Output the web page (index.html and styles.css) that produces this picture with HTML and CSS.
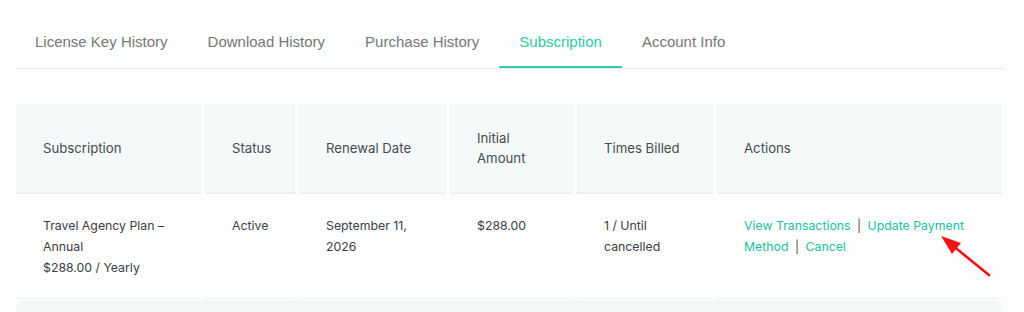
FILE: index.html
```html
<!DOCTYPE html>
<html>
<head>
    <meta charset="UTF-8">
    <title>Subscription</title>
    <link rel="stylesheet" href="styles.css">
</head>
<body>
    <div class="tabs">
        <a class="tab">License Key History</a>
        <a class="tab">Download History</a>
        <a class="tab">Purchase History</a>
        <a class="tab active">Subscription</a>
        <a class="tab">Account Info</a>
    </div>

    <table class="subs">
        <thead>
            <tr>
                <th class="c-sub">Subscription</th>
                <th class="c-status">Status</th>
                <th class="c-date">Renewal Date</th>
                <th class="c-amount">Initial Amount</th>
                <th class="c-billed">Times Billed</th>
                <th class="c-actions">Actions</th>
            </tr>
        </thead>
        <tbody>
            <tr>
                <td>Travel Agency Plan &ndash; Annual<br>$288.00 / Yearly</td>
                <td>Active</td>
                <td>September 11, 2026</td>
                <td>$288.00</td>
                <td>1 / Until cancelled</td>
                <td class="actions">
                    <a href="#">View Transactions</a> <span class="sep">|</span> <a href="#">Update Payment Method</a> <span class="sep">|</span> <a href="#">Cancel</a>
                </td>
            </tr>
        </tbody>
    </table>
    <div class="shade"></div>

    <svg class="arrow" width="70" height="60" viewBox="0 0 70 60">
        <line x1="57" y1="43" x2="20" y2="13" stroke="#f01414" stroke-width="2.6" stroke-linecap="round"/>
        <polygon points="9,4 29,11 20,22" fill="#f01414"/>
    </svg>
</body>
</html>
```

FILE: styles.css
```css
body {
    margin: 0;
    background-color: #fcfdfd;
    font-family: Inter, "Noto Sans", sans-serif;
    height: 312px;
    overflow: hidden;
    position: relative;
}

.tabs {
    display: flex;
    margin: 0 19px 0 15px;
    border-bottom: 1px solid #e7ebee;
}

.tab {
    padding: 33px 20px 15px;
    line-height: 18px;
    font-family: "Liberation Sans", Arial, sans-serif;
    font-size: 15px;
    color: #787878;
    border-bottom: 2px solid transparent;
}

.tab.active {
    color: #2fc8a8;
    border-bottom-color: #3ccaac;
}

.subs {
    margin: 35px 0 0 12px;
    width: 994px;
    table-layout: fixed;
    border-collapse: separate;
    border-spacing: 4px 0;
    font-size: 12.3px;
}

.subs th {
    background-color: #f4f9fa;
    color: #464b50;
    font-size: 13.2px;
    font-weight: 400;
    text-align: left;
    line-height: 20px;
    height: 90px;
    padding: 0 20px 0 27px;
    box-sizing: border-box;
    vertical-align: middle;
    border-bottom: 2px solid #eef0f1;
}

.c-sub { width: 185px; }
.c-status { width: 90px; }
.c-date { width: 147px; }
.c-amount { width: 123px; }
.c-billed { width: 136px; }
.c-actions { width: 285px; }

.subs td {
    color: #3c4146;
    line-height: 21px;
    padding: 21px 20px 20px 27px;
    vertical-align: top;
    background-color: #fdfdfd;
    border-bottom: 1px solid #eef1f2;
}

.subs td.actions {
    padding-right: 14px;
}

.actions a {
    color: #20c19f;
    text-decoration: none;
}

.sep {
    color: #555;
    padding: 0 3px;
}

.shade {
    margin: 1px 22px 0 16px;
    height: 16px;
    background-color: #f3f6f7;
    border-top-left-radius: 10px;
    border-top-right-radius: 10px;
}

.arrow {
    position: absolute;
    left: 932px;
    top: 232px;
}
```
